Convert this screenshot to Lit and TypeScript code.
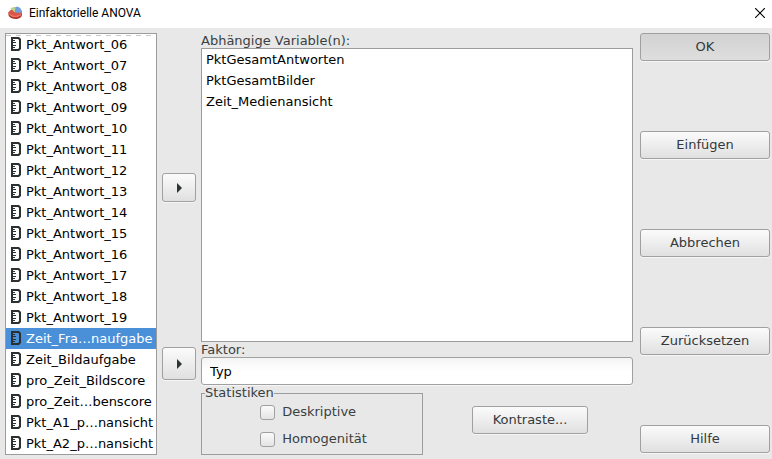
import { LitElement, html, css, svg } from "lit";
import { customElement, state } from "lit/decorators.js";

const scaleIcon = svg`<svg class="scale" viewBox="0 0 10 15" width="10" height="15" aria-hidden="true">
  <path fill-rule="evenodd" d="M0 0H8L10 2V12L8 14H0ZM2 2V12H7L8 11V3L7 2Z" fill="#2b3033" />
  <path d="M2 3.500H4M2 5.500H5M2 8.500H5M2 10.500H4" stroke="#2b3033" stroke-width="1" />
</svg>`;

const arrowIcon = svg`<svg viewBox="0 0 5 10" width="5" height="10" aria-hidden="true">
  <path d="M0 0L5 5L0 10Z" fill="#2e3436" />
</svg>`;

@customElement("app-root")
export class AppRoot extends LitElement {
  static styles = css`
    :host {
      display: flex;
      flex-direction: column;
      min-height: 100vh;
      background: #e8e8e8;
      color: #3a3f41;
      font: 13px/16px "DejaVu Sans", sans-serif;
    }
    * {
      box-sizing: border-box;
    }
    .titlebar {
      display: flex;
      align-items: center;
      height: 28px;
      padding: 0 7px 3px 8px;
      background: #fff;
      color: #000;
    }
    .title {
      flex: 1;
      margin: 0 0 0 6px;
      font: 12px/16px Roboto, "Open Sans", sans-serif;
    }
    .close {
      display: flex;
      padding: 0;
      border: 0;
      background: none;
    }
    .dialog {
      flex: 1;
      display: grid;
      grid-template-columns: 152px 34px minmax(0, 1fr) 132px;
      grid-template-rows: 1fr auto auto;
      column-gap: 5px;
      padding: 5px 2px 4px 5px;
    }
    .list {
      margin: 0;
      padding: 0;
      list-style: none;
      border: 1px solid #9c9c9c;
      background: #fff;
      color: #000;
    }
    .source {
      grid-row: 1 / 4;
      background: repeating-linear-gradient(90deg, #c8c8c8 0 5px, #fff 5px 10px) 0 1px / 100% 1px no-repeat #fff;
    }
    .item {
      display: flex;
      align-items: center;
      gap: 5px;
      height: 21px;
      padding: 0 4px;
      white-space: nowrap;
    }
    .source .item {
      padding: 0 0 0 5px;
    }
    .item.selected {
      background: #4a90d9;
      color: #fff;
    }
    .scale {
      flex: none;
    }
    .move {
      align-self: center;
      display: flex;
      align-items: center;
      justify-content: center;
      height: 29px;
    }
    .tall {
      height: 33px;
    }
    .button {
      padding: 0;
      border: 1px solid #a0a0a0;
      border-radius: 3px;
      background: linear-gradient(#fbfbfb, #e0e0e0);
      box-shadow: 0 1px #f6f6f6;
      color: #33393b;
      font: inherit;
    }
    .wide {
      height: 28px;
    }
    .default {
      background: linear-gradient(#d2d2d2, #dedede);
    }
    .group {
      display: flex;
      flex-direction: column;
    }
    .caption {
      height: 15px;
      line-height: 15px;
    }
    .target {
      flex: 1;
    }
    .factor {
      width: 100%;
      height: 28px;
      padding: 0 8px;
      border: 1px solid #a0a0a0;
      border-radius: 3px;
      background: linear-gradient(#f4f4f4, #fff 50%);
      box-shadow: 0 1px #f6f6f6;
      color: #000;
      font: inherit;
    }
    .options {
      grid-column: 3;
      display: grid;
      grid-template-columns: 222px 1fr;
      column-gap: 4px;
      align-items: center;
    }
    .statistics {
      display: flex;
      flex-direction: column;
      align-items: center;
      min-width: 0;
      height: 70px;
      margin: 0;
      padding: 0 0 0 3px;
      border: 1px solid #9c9c9c;
    }
    .legend {
      padding: 0;
    }
    .checks {
      display: grid;
      row-gap: 11px;
      padding-top: 3px;
    }
    .check {
      display: flex;
      align-items: center;
      gap: 7px;
    }
    .box {
      appearance: none;
      width: 15px;
      height: 15px;
      margin: 0;
      border: 1px solid #a0a0a0;
      border-radius: 3px;
      background: linear-gradient(#fafafa, #e4e4e4);
    }
    .box:checked {
      background: #4a90d9;
    }
    .contrasts {
      justify-self: center;
      width: 116px;
    }
    .actions {
      grid-column: 4;
      grid-row: 1 / 4;
      display: flex;
      flex-direction: column;
      justify-content: space-between;
      padding: 0 0 2px 2px;
    }
  `;

  @state() private selected = "Zeit_Fra…naufgabe";

  private variables = [
    ...Array.from({ length: 14 }, (_, i) => `Pkt_Antwort_${String(i + 6).padStart(2, "0")}`),
    "Zeit_Fra…naufgabe",
    "Zeit_Bildaufgabe",
    "pro_Zeit_Bildscore",
    "pro_Zeit…benscore",
    "Pkt_A1_p…nansicht",
    "Pkt_A2_p…nansicht",
  ];

  private dependents = ["PktGesamtAntworten", "PktGesamtBilder", "Zeit_Medienansicht"];

  private actions = ["OK", "Einfügen", "Abbrechen", "Zurücksetzen", "Hilfe"];

  render() {
    return html`
      <header class="titlebar">
        <svg viewBox="0 0 15 14" width="15" height="14" aria-hidden="true">
          <path d="M0.5 6V9C1.5 14 13 14.500 14 9V5Z" fill="#b5332c" />
          <ellipse cx="7.300" cy="7" rx="6.800" ry="4.300" fill="#dd5548" />
          <path d="M7 6.500L2.500 2.500C4 1 6 1 8 1Z" fill="#b9d389" />
          <path d="M7 6.500L7.500 1C11 0 14 3 14 7Z" fill="#6f9fdc" />
          <path d="M2 8.500C4 11 10 11 13 8.500" fill="none" stroke="#ee8a78" />
        </svg>
        <h1 class="title">Einfaktorielle ANOVA</h1>
        <button class="close" aria-label="Schließen">
          <svg viewBox="0 0 10 10" width="10" height="10" aria-hidden="true">
            <path d="M0 0L10 10M10 0L0 10" stroke="#000" stroke-width="1.1" />
          </svg>
        </button>
      </header>
      <main class="dialog">
        <ul class="list source" role="listbox" aria-label="Variablen">
          ${this.variables.map(
            (name) => html`<li
              class="item ${name === this.selected ? "selected" : ""}"
              role="option"
              aria-selected=${name === this.selected}
              @click=${() => (this.selected = name)}
            >${scaleIcon}<span>${name}</span></li>`
          )}
        </ul>
        <button class="button move" aria-label="Zu abhängigen Variablen">${arrowIcon}</button>
        <section class="group">
          <span class="caption" id="dependent">Abhängige Variable(n):</span>
          <ul class="list target" role="listbox" aria-labelledby="dependent">
            ${this.dependents.map((name) => html`<li class="item" role="option">${name}</li>`)}
          </ul>
        </section>
        <button class="button move tall" aria-label="Zu Faktor">${arrowIcon}</button>
        <div class="group">
          <label class="caption" for="factor">Faktor:</label>
          <input class="factor" id="factor" type="text" value="Typ" />
        </div>
        <div class="options">
          <fieldset class="statistics">
            <legend class="legend">Statistiken</legend>
            <div class="checks">
              <label class="check"><input class="box" type="checkbox" />Deskriptive</label>
              <label class="check"><input class="box" type="checkbox" />Homogenität</label>
            </div>
          </fieldset>
          <button class="button wide contrasts">Kontraste...</button>
        </div>
        <nav class="actions" aria-label="Aktionen">
          ${this.actions.map(
            (name) => html`<button class="button wide ${name === "OK" ? "default" : ""}">${name}</button>`
          )}
        </nav>
      </main>
    `;
  }
}
